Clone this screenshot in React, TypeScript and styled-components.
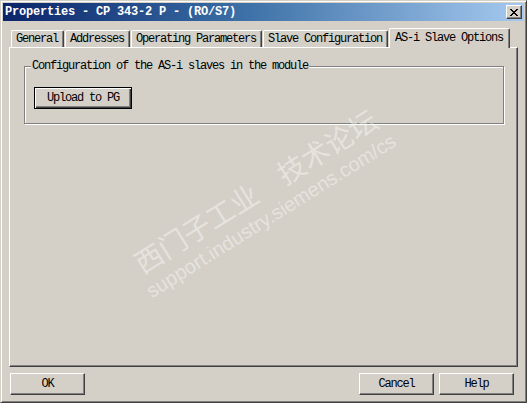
import React from "react";
import styled, { createGlobalStyle } from "styled-components";

const GlobalStyle = createGlobalStyle`
  html, body {
    margin: 0;
    padding: 0;
    background: #d4d0c8;
  }
  * { box-sizing: border-box; }
`;

const uiFont = `"Liberation Mono", "Noto Sans CJK SC", monospace`;

const Window = styled.div`
  position: relative;
  width: 527px;
  height: 403px;
  padding: 3px;
  display: flex;
  flex-direction: column;
  background: #d4d0c8;
  border: 1px solid;
  border-color: #d4d0c8 #404040 #404040 #d4d0c8;
  box-shadow: inset 1px 1px 0 #ffffff, inset -1px -1px 0 #808080;
  overflow: hidden;
  font-family: ${uiFont};
  font-size: 12px;
  letter-spacing: -1.2px;
  color: #000;
`;

const TitleBar = styled.div`
  height: 18px;
  margin: -1px -1px 0 -1px;
  display: flex;
  align-items: center;
  justify-content: space-between;
  padding: 0 2px 0 2px;
  background: linear-gradient(to right, #0a246a 0%, #3a6ea5 45%, #a6caf0 100%);
`;

const Title = styled.span`
  color: #ffffff;
  font-weight: bold;
  letter-spacing: -0.2px;
  white-space: pre;
  line-height: 18px;
`;

const CloseButton = styled.div`
  width: 16px;
  height: 14px;
  display: flex;
  align-items: center;
  justify-content: center;
  background: #d4d0c8;
  border: 1px solid;
  border-color: #ffffff #404040 #404040 #ffffff;
  box-shadow: inset -1px -1px 0 #808080;
`;

const Body = styled.div`
  flex: 1;
  display: flex;
  flex-direction: column;
  padding: 7px 5px 0 5px;
`;

const TabStrip = styled.div`
  height: 19px;
  display: flex;
  align-items: flex-end;
  gap: 1px;
  padding-left: 2px;
`;

const Tab = styled.div<{ $active?: boolean }>`
  position: relative;
  z-index: ${(p) => (p.$active ? 2 : 0)};
  height: ${(p) => (p.$active ? "20px" : "17px")};
  margin-bottom: ${(p) => (p.$active ? "-1px" : "0")};
  padding: ${(p) => (p.$active ? "0 6px 2px 5px" : "0 5px 0 4px")};
  display: flex;
  align-items: center;
  white-space: pre;
  background: #d4d0c8;
  border-top: 1px solid #ffffff;
  border-left: 1px solid #ffffff;
  border-right: 1px solid #404040;
  border-top-left-radius: 2px;
  border-top-right-radius: 2px;
  box-shadow: inset -1px 0 0 #808080;
`;

const Panel = styled.div`
  position: relative;
  z-index: 1;
  height: 320px;
  padding: 18px 13px 0 14px;
  border: 1px solid;
  border-color: #ffffff #404040 #404040 #ffffff;
  box-shadow: inset -1px -1px 0 #808080;
`;

const GroupBox = styled.div`
  position: relative;
  padding: 20px 9px 14px 9px;
  border: 1px solid #808080;
  box-shadow: 1px 1px 0 #ffffff, inset 1px 1px 0 #ffffff;
`;

const GroupCaption = styled.span`
  position: absolute;
  top: -7px;
  left: 6px;
  padding: 0 1px;
  line-height: 12px;
  background: #d4d0c8;
  white-space: pre;
`;

const Button = styled.div<{ $default?: boolean; $width: number }>`
  width: ${(p) => p.$width}px;
  height: 22px;
  display: flex;
  align-items: center;
  justify-content: center;
  white-space: pre;
  background: #d4d0c8;
  border: 1px solid;
  border-color: ${(p) =>
    p.$default ? "#000000" : "#ffffff #404040 #404040 #ffffff"};
  box-shadow: ${(p) =>
    p.$default
      ? "inset 1px 1px 0 #ffffff, inset -1px -1px 0 #404040, inset -2px -2px 0 #808080"
      : "inset -1px -1px 0 #808080"};
`;

const ButtonRow = styled.div`
  display: flex;
  justify-content: space-between;
  align-items: center;
  margin-top: 6px;
  padding: 0 4px 0 1px;
`;

const ButtonGroup = styled.div`
  display: flex;
  gap: 5px;
`;

const Watermark = styled.div`
  position: absolute;
  left: 262px;
  top: 202px;
  transform: translate(-50%, -50%) rotate(-32deg);
  display: flex;
  flex-direction: column;
  align-items: center;
  pointer-events: none;
  color: rgba(255, 255, 255, 0.42);
  letter-spacing: 0;
  white-space: pre;
  z-index: 5;
`;

const WatermarkCn = styled.div`
  font-family: "Noto Sans CJK SC", sans-serif;
  font-size: 28px;
  line-height: 30px;
`;

const WatermarkEn = styled.div`
  font-family: "Liberation Sans", Arial, sans-serif;
  font-size: 20px;
  line-height: 30px;
`;

const CloseIcon = () => (
  <svg width="8" height="7" viewBox="0 0 8 7" shapeRendering="crispEdges">
    <path
      d="M0 0h2v1H0zM6 0h2v1H6zM1 1h2v1H1zM5 1h2v1H5zM2 2h4v1H2zM3 3h2v1H3zM2 4h4v1H2zM1 5h2v1H1zM5 5h2v1H5zM0 6h2v1H0zM6 6h2v1H6z"
      fill="#000"
    />
  </svg>
);

const tabs = [
  "General",
  "Addresses",
  "Operating Parameters",
  "Slave Configuration",
  "AS-i Slave Options",
];

export default function App() {
  return (
    <>
      <GlobalStyle />
      <Window>
        <TitleBar>
          <Title>Properties - CP 343-2 P - (RO/S7)</Title>
          <CloseButton>
            <CloseIcon />
          </CloseButton>
        </TitleBar>
        <Body>
          <TabStrip>
            {tabs.map((t, i) => (
              <Tab key={t} $active={i === tabs.length - 1}>
                {t}
              </Tab>
            ))}
          </TabStrip>
          <Panel>
            <GroupBox>
              <GroupCaption>Configuration of the AS-i slaves in the module</GroupCaption>
              <Button $default $width={98}>
                Upload to PG
              </Button>
            </GroupBox>
          </Panel>
          <ButtonRow>
            <Button $width={75}>OK</Button>
            <ButtonGroup>
              <Button $width={75}>Cancel</Button>
              <Button $width={75}>Help</Button>
            </ButtonGroup>
          </ButtonRow>
        </Body>
        <Watermark>
          <WatermarkCn>西门子工业　技术论坛</WatermarkCn>
          <WatermarkEn>support.industry.siemens.com/cs</WatermarkEn>
        </Watermark>
      </Window>
    </>
  );
}
